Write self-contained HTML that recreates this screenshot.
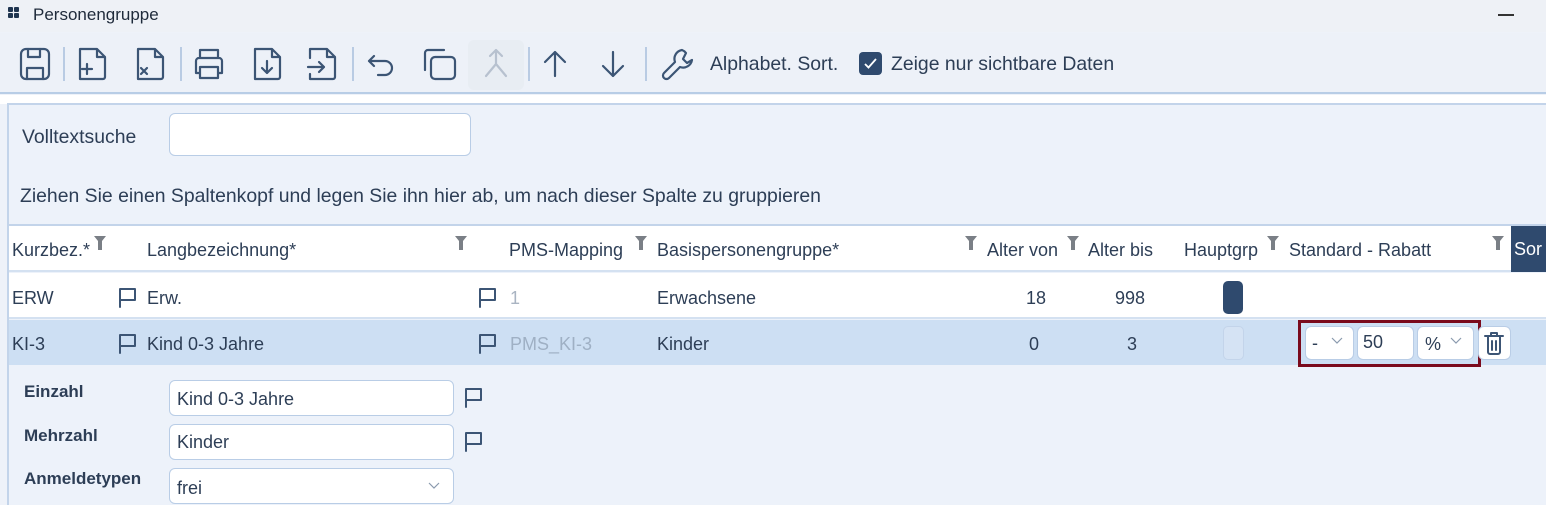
<!DOCTYPE html>
<html><head><meta charset="utf-8"><style>
*{box-sizing:border-box;margin:0;padding:0}
body{width:1546px;height:505px;overflow:hidden;background:#eef2f9;font-family:"Liberation Sans",sans-serif;color:#2d3e56;position:relative}
.a{position:absolute;white-space:nowrap}
.t{font-size:18px}
.w{font-size:19.4px}
svg.i{position:absolute;fill:none;stroke:#3c5575;stroke-width:2.2;stroke-linecap:round;stroke-linejoin:round}
.sep{position:absolute;top:47px;width:2px;height:34px;background:#b9cbe3}
.inp{position:absolute;background:#fff;border:1px solid #b9cde6;border-radius:6px}
.flag{position:absolute;width:20px;height:22px}
</style></head><body>
<div class="a" style="left:0;top:0;width:1546px;height:32px;background:#eef1f6"></div>
<div class="a" style="left:8px;top:7px;width:5px;height:5px;background:#1f3550;box-shadow:6px 0 #1f3550,0 6px #1f3550,6px 6px #1f3550;border-radius:1px"></div>
<div class="a" style="left:33px;top:5px;font-size:17px;color:#1e2a3a">Personengruppe</div>
<div class="a" style="left:1498px;top:14px;width:16px;height:2px;background:#333"></div>
<div class="a" style="left:0;top:33px;width:1546px;height:61px;background:#edf1f8;border-bottom:2px solid #b8cde6"></div>
<div class="a" style="left:0;top:95px;width:1546px;height:9px;background:#fff"></div>
<svg class="i" style="left:18px;top:46px" width="34" height="36" viewBox="0 0 34 36"><rect x="3" y="3" width="28" height="30" rx="5"/><path d="M10 3v8h12V3M9 33V22h16v11"/></svg>
<div class="sep" style="left:63px"></div>
<svg class="i" style="left:76px;top:46px" width="34" height="36" viewBox="0 0 34 36"><path d="M4 3h17l8 8v20a2 2 0 0 1-2 2H4z M21 3v8h8"/><path d="M11 18v10M6 23h10"/></svg>
<svg class="i" style="left:134px;top:46px" width="34" height="36" viewBox="0 0 34 36"><path d="M4 3h17l8 8v20a2 2 0 0 1-2 2H4z M21 3v8h8"/><path d="M7 22l6 6M13 22l-6 6"/></svg>
<div class="sep" style="left:180px"></div>
<svg class="i" style="left:191px;top:46px" width="36" height="36" viewBox="0 0 36 36"><path d="M9 12V4h18v8M9 27H5V15a3 3 0 0 1 3-3h20a3 3 0 0 1 3 3v12h-4M9 21h18v11H9z"/></svg>
<svg class="i" style="left:251px;top:46px" width="34" height="36" viewBox="0 0 34 36"><path d="M4 3h17l8 8v20a2 2 0 0 1-2 2H4z M21 3v8h8"/><path d="M16 15v12M11 22l5 5 5-5"/></svg>
<svg class="i" style="left:306px;top:46px" width="34" height="36" viewBox="0 0 34 36"><path d="M4 12V3h17l8 8v20a2 2 0 0 1-2 2H4v-5 M21 3v8h8"/><path d="M2 21h16M13 16l5 5-5 5"/></svg>
<div class="sep" style="left:352px"></div>
<svg class="i" style="left:365px;top:46px" width="34" height="36" viewBox="0 0 34 36"><path d="M9 10l-5 5 5 5M4 15h16a7 7 0 0 1 0 14h-7"/></svg>
<svg class="i" style="left:420px;top:46px" width="38" height="36" viewBox="0 0 38 36"><rect x="11" y="11" width="24" height="22" rx="4"/><path d="M5 24V7a3 3 0 0 1 3-3h16"/></svg>
<div class="a" style="left:468px;top:40px;width:56px;height:50px;background:#e8edf3;border-radius:6px"></div>
<svg class="i" style="left:478px;top:46px;stroke:#b7c1cf" width="36" height="36" viewBox="0 0 36 36"><path d="M18 4v14l-10 12M18 18l10 12M12 10l6-6 6 6"/></svg>
<div class="sep" style="left:528px"></div>
<svg class="i" style="left:540px;top:46px" width="30" height="36" viewBox="0 0 30 36"><path d="M15 30V6M5 16l10-10 10 10"/></svg>
<svg class="i" style="left:598px;top:46px" width="30" height="36" viewBox="0 0 30 36"><path d="M15 6v24M5 20l10 10 10-10"/></svg>
<div class="sep" style="left:645px"></div>
<svg class="i" style="left:660px;top:46px" width="36" height="36" viewBox="0 0 36 36"><path d="M22 4a9 9 0 0 0-7 12L4 27a3 3 0 0 0 5 5l11-11a9 9 0 0 0 12-7l-5 3-4-4 3-6a9 9 0 0 0-4-3z"/></svg>
<div class="a w" style="left:710px;top:53px">Alphabet. Sort.</div>
<div class="a" style="left:859px;top:52px;width:23px;height:23px;background:#2f4a6e;border-radius:4px"></div>
<svg class="a" style="left:863px;top:56px" width="15" height="15" viewBox="0 0 15 15"><path d="M2 8l3.5 3.5L13 3" fill="none" stroke="#fff" stroke-width="1.8"/></svg>
<div class="a w" style="left:891px;top:53px">Zeige nur sichtbare Daten</div>
<div class="a" style="left:7px;top:103px;width:1539px;height:402px;border-left:2px solid #c3d4ea;border-top:2px solid #c3d4ea;background:#edf2fa"></div>
<div class="a w" style="left:22px;top:126px">Volltextsuche</div>
<div class="inp" style="left:169px;top:113px;width:302px;height:43px"></div>
<div class="a w" style="left:20px;top:185px">Ziehen Sie einen Spaltenkopf und legen Sie ihn hier ab, um nach dieser Spalte zu gruppieren</div>
<div class="a" style="left:9px;top:224px;width:1537px;height:2px;background:#c3d4ea"></div>
<div class="a" style="left:9px;top:226px;width:1537px;height:46px;background:#fff;border-bottom:2px solid #d4e1f1"></div>
<div class="a" style="left:1511px;top:226px;width:35px;height:46px;background:#2f4a6e;color:#fff;font-size:18px;padding:13px 0 0 3px;overflow:hidden">Sor</div>
<div class="a t" style="left:12px;top:240px">Kurzbez.*</div>
<div class="a t" style="left:147px;top:240px">Langbezeichnung*</div>
<div class="a t" style="left:509px;top:240px">PMS-Mapping</div>
<div class="a t" style="left:657px;top:240px">Basispersonengruppe*</div>
<div class="a t" style="left:987px;top:240px">Alter von</div>
<div class="a t" style="left:1088px;top:240px">Alter bis</div>
<div class="a t" style="left:1184px;top:240px">Hauptgrp</div>
<div class="a t" style="left:1289px;top:240px">Standard - Rabatt</div>
<svg class="a" style="left:94px;top:236px" width="12" height="14"><path d="M0 0h12L8 5v9H4V5z" fill="#7a7f86"/></svg>
<svg class="a" style="left:455px;top:236px" width="12" height="14"><path d="M0 0h12L8 5v9H4V5z" fill="#7a7f86"/></svg>
<svg class="a" style="left:635px;top:236px" width="12" height="14"><path d="M0 0h12L8 5v9H4V5z" fill="#7a7f86"/></svg>
<svg class="a" style="left:965px;top:236px" width="12" height="14"><path d="M0 0h12L8 5v9H4V5z" fill="#7a7f86"/></svg>
<svg class="a" style="left:1067px;top:236px" width="12" height="14"><path d="M0 0h12L8 5v9H4V5z" fill="#7a7f86"/></svg>
<svg class="a" style="left:1267px;top:236px" width="12" height="14"><path d="M0 0h12L8 5v9H4V5z" fill="#7a7f86"/></svg>
<svg class="a" style="left:1492px;top:236px" width="12" height="14"><path d="M0 0h12L8 5v9H4V5z" fill="#7a7f86"/></svg>
<div class="a" style="left:9px;top:273px;width:1537px;height:46px;background:#fff;border-bottom:2px solid #d4e1f1"></div>
<div class="a t" style="left:12px;top:288px">ERW</div>
<div class="a t" style="left:147px;top:288px">Erw.</div>
<div class="a t" style="left:510px;top:288px;color:#a9b4c2">1</div>
<div class="a t" style="left:657px;top:288px">Erwachsene</div>
<div class="a t" style="left:1026px;top:288px">18</div>
<div class="a t" style="left:1115px;top:288px">998</div>
<div class="a" style="left:1223px;top:281px;width:20px;height:33px;background:#2f4a6e;border-radius:5px"></div>
<div class="a" style="left:9px;top:320px;width:1537px;height:45px;background:#cddff3"></div>
<div class="a t" style="left:12px;top:334px">KI-3</div>
<div class="a t" style="left:147px;top:334px">Kind 0-3 Jahre</div>
<div class="a t" style="left:510px;top:334px;color:#9fb0c4">PMS_KI-3</div>
<div class="a t" style="left:657px;top:334px">Kinder</div>
<div class="a t" style="left:1029px;top:334px">0</div>
<div class="a t" style="left:1127px;top:334px">3</div>
<div class="a" style="left:1223px;top:326px;width:21px;height:34px;background:#d5e3f4;border:1px solid #c3d4ea;border-radius:5px"></div>
<div class="a" style="left:1298px;top:320px;width:183px;height:47px;border:3px solid #7a0a1c"></div>
<div class="inp" style="left:1305px;top:326px;width:49px;height:34px"></div>
<div class="a t" style="left:1312px;top:333px">-</div>
<div class="inp" style="left:1357px;top:326px;width:57px;height:34px"></div>
<div class="a t" style="left:1363px;top:332px">50</div>
<div class="inp" style="left:1417px;top:326px;width:57px;height:34px"></div>
<div class="a t" style="left:1425px;top:334px">%</div>
<svg class="a" style="left:1331px;top:337px" width="12" height="8"><path d="M1 1l5 5 5-5" fill="none" stroke="#8a9aae" stroke-width="1.2"/></svg>
<svg class="a" style="left:1450px;top:337px" width="12" height="8"><path d="M1 1l5 5 5-5" fill="none" stroke="#8a9aae" stroke-width="1.2"/></svg>
<div class="inp" style="left:1478px;top:326px;width:33px;height:34px"></div>
<svg class="i" style="left:1482px;top:330px;stroke-width:2" width="24" height="26" viewBox="0 0 24 26"><path d="M3 6h18M9 6V3h6v3M6 6v16a2 2 0 0 0 2 2h8a2 2 0 0 0 2-2V6M10 11v9M14 11v9"/></svg>
<svg class="flag i" style="left:118px;top:286px;stroke-width:2" viewBox="0 0 20 22"><path d="M2 21V3h15v11H2"/></svg>
<svg class="flag i" style="left:478px;top:286px;stroke-width:2" viewBox="0 0 20 22"><path d="M2 21V3h15v11H2"/></svg>
<svg class="flag i" style="left:118px;top:332px;stroke-width:2" viewBox="0 0 20 22"><path d="M2 21V3h15v11H2"/></svg>
<svg class="flag i" style="left:478px;top:332px;stroke-width:2" viewBox="0 0 20 22"><path d="M2 21V3h15v11H2"/></svg>
<svg class="flag i" style="left:464px;top:386px;stroke-width:2" viewBox="0 0 20 22"><path d="M2 21V3h15v11H2"/></svg>
<svg class="flag i" style="left:464px;top:430px;stroke-width:2" viewBox="0 0 20 22"><path d="M2 21V3h15v11H2"/></svg>
<div class="a" style="left:24px;top:382px;font-size:17px;font-weight:bold">Einzahl</div>
<div class="a" style="left:24px;top:426px;font-size:17px;font-weight:bold">Mehrzahl</div>
<div class="a" style="left:24px;top:469px;font-size:17px;font-weight:bold">Anmeldetypen</div>
<div class="inp" style="left:169px;top:380px;width:285px;height:36px"></div>
<div class="a t" style="left:177px;top:389px">Kind 0-3 Jahre</div>
<div class="inp" style="left:169px;top:424px;width:285px;height:36px"></div>
<div class="a t" style="left:177px;top:432px">Kinder</div>
<div class="inp" style="left:169px;top:468px;width:285px;height:36px"></div>
<div class="a t" style="left:177px;top:478px">frei</div>
<svg class="a" style="left:428px;top:482px" width="12" height="8"><path d="M1 1l5 5 5-5" fill="none" stroke="#8a9aae" stroke-width="1.2"/></svg>
</body></html>
